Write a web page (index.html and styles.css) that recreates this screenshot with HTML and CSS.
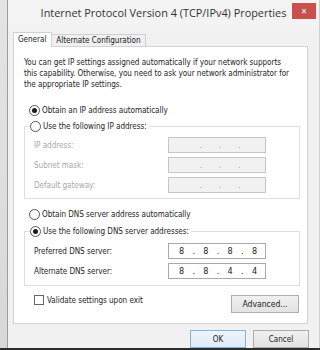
FILE: index.html
```html
<!DOCTYPE html>
<html>
<head>
<meta charset="utf-8">
<link rel="stylesheet" href="styles.css">
</head>
<body>
<div class="screen">
  <div class="strip"></div>
  <div class="window">
    <div class="titlebar">
      <div class="title">Internet Protocol Version 4 (TCP/IPv4) Properties</div>
      <div class="close">&#x2715;</div>
    </div>
    <div class="body">
      <div class="tabs">
        <div class="tab active">General</div>
        <div class="tab">Alternate Configuration</div>
      </div>
      <div class="panel">
        <p class="intro">You can get IP settings assigned automatically if your network supports this capability. Otherwise, you need to ask your network administrator for the appropriate IP settings.</p>
        <div class="radio-row first"><span class="radio checked"></span>Obtain an IP address automatically</div>
        <fieldset class="group ip">
          <legend><span class="radio"></span>Use the following IP address:</legend>
          <div class="field disabled"><span class="label">IP address:</span><span class="ipbox"><i>.</i><i>.</i><i>.</i></span></div>
          <div class="field disabled"><span class="label">Subnet mask:</span><span class="ipbox"><i>.</i><i>.</i><i>.</i></span></div>
          <div class="field disabled"><span class="label">Default gateway:</span><span class="ipbox"><i>.</i><i>.</i><i>.</i></span></div>
        </fieldset>
        <div class="radio-row dns"><span class="radio"></span>Obtain DNS server address automatically</div>
        <fieldset class="group dnsgroup">
          <legend><span class="radio checked"></span>Use the following DNS server addresses:</legend>
          <div class="field"><span class="label">Preferred DNS server:</span><span class="ipbox on"><b>8</b><i>.</i><b>8</b><i>.</i><b>8</b><i>.</i><b>8</b></span></div>
          <div class="field"><span class="label">Alternate DNS server:</span><span class="ipbox on"><b>8</b><i>.</i><b>8</b><i>.</i><b>4</b><i>.</i><b>4</b></span></div>
        </fieldset>
        <div class="bottom-row">
          <div class="check"><span class="box"></span>Validate settings upon exit</div>
          <div class="btn adv">Advanced...</div>
        </div>
      </div>
      <div class="buttons">
        <div class="btn ok">OK</div>
        <div class="btn">Cancel</div>
      </div>
    </div>
  </div>
</div>
<div class="baseline"></div>
</body>
</html>
```

FILE: styles.css
```css
html, body { margin: 0; padding: 0; }
body {
  width: 320px;
  height: 350px;
  overflow: hidden;
  background: #f0f0f0;
  font-family: "DejaVu Sans Condensed", "DejaVu Sans", sans-serif;
  font-stretch: condensed;
  font-size: 8.1px;
  letter-spacing: -0.05px;
  color: #1e1e1e;
}
.screen { display: flex; height: 348px; }
.strip {
  width: 7px;
  background: linear-gradient(#e4e4e4, #d8d8d8);
  border-right: 1px solid #9c9c9c;
}
.window {
  flex: 1;
  display: flex;
  flex-direction: column;
  background: #f1f1f1;
  border-right: 1px solid #d0d0d0;
}
.titlebar {
  height: 28px;
  display: flex;
  align-items: flex-start;
  justify-content: center;
  position: relative;
  background: #f3f3f3;
}
.title {
  font-family: "Open Sans", sans-serif;
  font-stretch: normal;
  letter-spacing: 0;
  font-size: 10.9px;
  color: #333;
  margin-top: 5px;
  margin-left: 0;
}
.close {
  position: absolute;
  right: 3px;
  top: 3px;
  width: 24px;
  height: 16px;
  background: #c9504f;
  color: #fff;
  font-size: 8px;
  font-family: "DejaVu Sans", sans-serif;
  display: flex;
  align-items: center;
  justify-content: center;
}
.body {
  flex: 1;
  display: flex;
  flex-direction: column;
  padding: 4px 11px 0 5px;
}
.tabs { display: flex; align-items: flex-end; height: 14px; }
.tab {
  height: 11px;
  padding: 0 4px;
  border: 1px solid #d0d0d0;
  border-bottom: none;
  background: #f0f0f0;
  line-height: 11px;
  color: #222;
}
.tab.active {
  background: #fff;
  line-height: 13px;
  padding: 0 5px 0 4px;
  position: relative;
  z-index: 1;
  margin-bottom: -1px;
  height: 14px;
}
.tab + .tab { margin-left: -1px; }
.panel {
  height: 276px;
  background: #fff;
  border: 1px solid #d2d2d2;
  padding: 0 7px 0 10px;
  display: flex;
  flex-direction: column;
}
.intro {
  margin: 10px 0 0 0;
  line-height: 11px;
  width: 266px;
}
.radio-row, legend {
  display: flex;
  align-items: center;
  height: 12px;
  line-height: 12px;
}
.radio-row { padding-left: 5px; }
.radio-row.first { margin-top: 14px; }
.radio {
  width: 9px;
  height: 9px;
  border: 1px solid #555;
  border-radius: 50%;
  margin-right: 2px;
  background: #fff;
  display: inline-flex;
  align-items: center;
  justify-content: center;
  flex: none;
}
.radio.checked::after {
  content: "";
  width: 5px;
  height: 5px;
  border-radius: 50%;
  background: #1a1a1a;
}
.group {
  margin: 4px 0 0 0;
  border: 1px solid #dedede;
  padding: 5px 0 5px 9px;
  min-width: 0;
}
legend { padding: 0 2px 0 0; margin-left: -4px; background: #fff; }
.field {
  display: flex;
  align-items: center;
  height: 16px;
}
.field + .field { margin-top: 4px; }
.label { width: 134px; }
.disabled .label { color: #a8a8a8; }
.ipbox {
  height: 14px;
  border: 1px solid #c6c6c6;
  background: #f1f1f1;
  display: flex;
  align-items: center;
  justify-content: space-evenly;
  padding: 0 8px 0 14px;
  box-sizing: content-box;
  width: 74px;
}
.ipbox i { font-style: normal; color: #a0a0a0; }
.ipbox.on {
  background: #fff;
  border-color: #a9a9a9;
  justify-content: space-between;
  padding: 0 8px 0 10px;
  width: 78px;
  font-size: 9px;
}
.ipbox.on b { font-weight: normal; color: #222; }
.ipbox.on i { color: #222; }
.radio-row.dns { margin-top: 9px; }
.dnsgroup { margin-top: 5px; padding-top: 6px; padding-bottom: 6px; }
.bottom-row {
  display: flex;
  justify-content: space-between;
  align-items: flex-start;
  margin-top: 9px;
  padding-right: 1px;
}
.check { display: flex; align-items: center; padding-left: 10px; height: 10px; }
.box {
  width: 8px;
  height: 8px;
  border: 1px solid #666;
  margin-right: 3px;
  background: #fff;
}
.btn {
  height: 15px;
  border: 1px solid #adadad;
  background: linear-gradient(#f0f0f0, #e3e3e3);
  display: flex;
  align-items: center;
  justify-content: center;
  color: #222;
}
.adv { width: 66px; height: 16px; font-size: 8.6px; }
.buttons {
  display: flex;
  justify-content: flex-end;
  gap: 7px;
  margin-top: 6px;
  margin-right: -1px;
}
.buttons .btn { width: 54px; height: 16px; }
.btn.ok { border-color: #7fb2e3; background: linear-gradient(#eef5fc, #e0ebf7); }
.baseline { height: 2px; background: #2d2d2d; }
```
